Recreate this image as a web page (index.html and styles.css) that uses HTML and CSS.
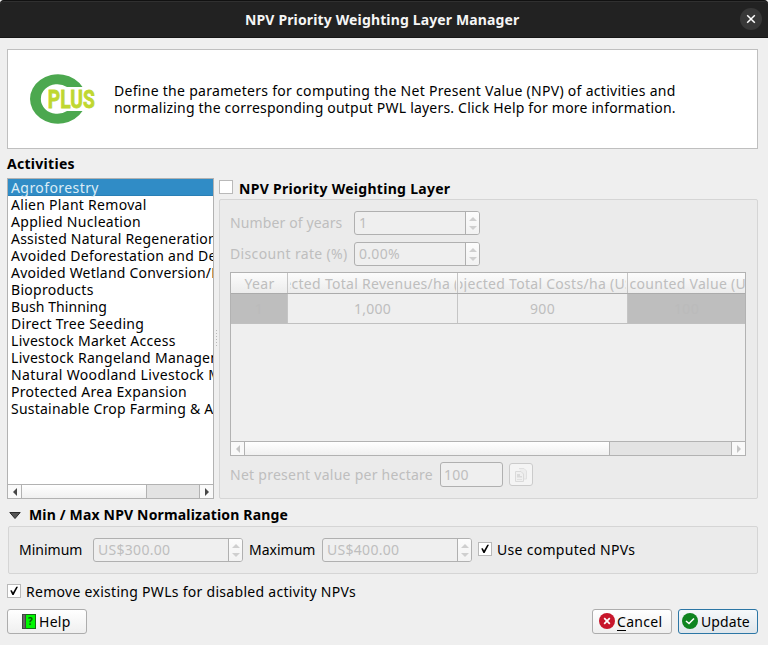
FILE: index.html
```html
<!DOCTYPE html>
<html lang="en">
<head>
<meta charset="utf-8">
<title>NPV Priority Weighting Layer Manager</title>
<link rel="stylesheet" href="styles.css">
</head>
<body>
<svg class="defs" width="0" height="0">
  <symbol id="check" viewBox="0 0 14 14"><path d="M3.2 6.6 4.8 6.2 6 8.6 9.3 2.8 11 2.8 6.6 11 5.4 11Z" fill="#000"/></symbol>
  <symbol id="up" viewBox="0 0 8 4"><path d="M0 4 4 0 8 4Z"/></symbol>
  <symbol id="down" viewBox="0 0 8 4"><path d="M0 0 4 4 8 0Z"/></symbol>
  <symbol id="left" viewBox="0 0 4 8"><path d="M4 0 0 4 4 8Z"/></symbol>
  <symbol id="right" viewBox="0 0 4 8"><path d="M0 0 4 4 0 8Z"/></symbol>
</svg>
<div class="window">
  <header class="titlebar">
    <h1 class="title">NPV Priority Weighting Layer Manager</h1>
    <button class="close" aria-label="Close"><svg width="22" height="22" viewBox="0 0 22 22"><path d="M7.2 7.2 14.8 14.8M14.8 7.2 7.2 14.8" stroke="#fff" stroke-width="1.5"/></svg></button>
  </header>
  <main class="content">
    <section class="banner">
      <svg class="logo" width="68" height="52" viewBox="0 0 68 52">
        <path d="M53.500 14A28 24.700 0 1 0 53.500 38H38A16.500 14.800 0 1 1 38 14Z" fill="#4ca84f"/>
        <text x="18.800" y="35.300" textLength="47" lengthAdjust="spacingAndGlyphs" class="logo-text">PLUS</text>
      </svg>
      <p class="intro"><span class="intro-a">Define the parameters for computing the Net Present Value (NPV) of activities and</span><br><span class="intro-b">normalizing the corresponding output PWL layers. Click Help for more information.</span></p>
    </section>
    <h2 class="heading activities-title">Activities</h2>
    <section class="panes">
      <div class="list">
        <ul class="items">
          <li class="selected">Agroforestry</li>
          <li>Alien Plant Removal</li>
          <li>Applied Nucleation</li>
          <li class="snug">Assisted Natural Regeneration</li>
          <li>Avoided Deforestation and Degradation</li>
          <li class="snug">Avoided Wetland Conversion/Restoration</li>
          <li>Bioproducts</li>
          <li class="tight">Bush Thinning</li>
          <li>Direct Tree Seeding</li>
          <li>Livestock Market Access</li>
          <li>Livestock Rangeland Management</li>
          <li class="loose">Natural Woodland Livestock Management</li>
          <li>Protected Area Expansion</li>
          <li class="snug">Sustainable Crop Farming &amp; Aquaculture</li>
        </ul>
        <div class="scroll">
          <span class="arrow"><svg width="4" height="8"><use href="#left"/></svg></span>
          <span class="thumb list-thumb"></span><span class="track"></span>
          <span class="arrow last"><svg width="4" height="8"><use href="#right"/></svg></span>
        </div>
      </div>
      <div class="splitter"></div>
      <div class="detail">
        <div class="group-title"><span class="box"></span><h2 class="heading layer-title">NPV Priority Weighting Layer</h2></div>
        <div class="group disabled">
          <div class="field"><label class="label years">Number of years</label><div class="spin"><span class="value">1</span><span class="steps"><svg width="8" height="4"><use href="#up"/></svg><svg width="8" height="4"><use href="#down"/></svg></span></div></div>
          <div class="field"><label class="label rate">Discount rate (%)</label><div class="spin"><span class="value">0.00%</span><span class="steps"><svg width="8" height="4"><use href="#up"/></svg><svg width="8" height="4"><use href="#down"/></svg></span></div></div>
          <div class="table">
            <div class="row head"><div class="cell"><div class="clip"><span>Year</span></div></div><div class="cell"><div class="clip"><span>Projected Total Revenues/ha (US$)</span></div></div><div class="cell"><div class="clip"><span>Projected Total Costs/ha (US$)</span></div></div><div class="cell"><div class="clip"><span>Discounted Value (US$)</span></div></div></div>
            <div class="row data"><div class="cell locked">1</div><div class="cell">1,000</div><div class="cell">900</div><div class="cell locked">100</div></div>
            <div class="empty"></div>
            <div class="scroll">
              <span class="arrow"><svg width="4" height="8"><use href="#left"/></svg></span>
              <span class="thumb table-thumb"></span><span class="track"></span>
              <span class="arrow last"><svg width="4" height="8"><use href="#right"/></svg></span>
            </div>
          </div>
          <div class="result"><label class="label npv">Net present value per hectare</label><div class="input">100</div>
            <button class="copy" aria-label="Copy"><svg width="12" height="14" viewBox="0 0 12 14"><path d="M4 .5H9L11.500 3V11H9" fill="#ededed" stroke="#e0e0e0"/><path d="M.5 3.500H6L8.500 6V13.500H.5Z" fill="#f0f0f0" stroke="#dadada"/><path d="M2 6H5V8H7V9.500H2Z" fill="#dadada"/><path d="M2 11.500H7" stroke="#e0e0e0"/></svg></button>
          </div>
        </div>
      </div>
    </section>
    <div class="collapse"><svg width="12" height="7" viewBox="0 0 12 7"><path d="M.8.5H11.200L6 6.500Z" fill="#555" stroke="#2b2b2b"/></svg><h2 class="heading range-title">Min / Max NPV Normalization Range</h2></div>
    <section class="range">
      <label class="label minimum">Minimum</label><div class="spin wide"><span class="value">US$300.00</span><span class="steps"><svg width="8" height="4"><use href="#up"/></svg><svg width="8" height="4"><use href="#down"/></svg></span></div>
      <label class="label maximum">Maximum</label><div class="spin wide"><span class="value">US$400.00</span><span class="steps"><svg width="8" height="4"><use href="#up"/></svg><svg width="8" height="4"><use href="#down"/></svg></span></div>
      <span class="box"><svg width="14" height="14"><use href="#check"/></svg></span><span class="computed">Use computed NPVs</span>
    </section>
    <div class="remove"><span class="box"><svg width="14" height="14"><use href="#check"/></svg></span><span class="remove-text">Remove existing PWLs for disabled activity NPVs</span></div>
    <footer class="actions">
      <button class="button help"><svg width="14" height="15" viewBox="0 0 14 15"><rect x=".5" y=".5" width="13" height="14" fill="#00f800" stroke="#176b17"/><path d="M.5.5H3.500V14.500H.5Z" fill="#666" stroke="#444"/><text x="6" y="11" class="help-mark">?</text></svg><span>Help</span></button>
      <button class="button cancel"><svg width="16" height="16" viewBox="0 0 16 16"><circle cx="8" cy="8" r="8" fill="#c7162b"/><path d="M5.200 5.200 10.800 10.800M10.800 5.200 5.200 10.800" stroke="#fff" stroke-width="1.700"/></svg><span><span class="mnemonic">C</span>ancel</span></button>
      <button class="button update"><svg width="16" height="16" viewBox="0 0 16 16"><circle cx="8" cy="8" r="8" fill="#0e8420"/><path d="M4 8 7 10.500 12 5.500" fill="none" stroke="#fff" stroke-width="1.600"/></svg><span>Update</span></button>
    </footer>
  </main>
</div>
</body>
</html>
```
FILE: styles.css
```css
* { box-sizing: border-box; }
body { margin: 0; background: #efefef; color: #000; font: 14px/17px "Noto Sans", sans-serif; letter-spacing: .29px; overflow: hidden; }
h1, h2, p, ul { margin: 0; padding: 0; }
button { font: inherit; color: inherit; padding: 0; margin: 0; }
svg { display: block; flex: none; letter-spacing: 0; }
.defs { display: none; }
.window { width: 768px; height: 645px; background: #efefef; white-space: nowrap; }
.titlebar { height: 38px; padding: 0 6px 0 245px; display: flex; align-items: center; justify-content: space-between; background: #222; border-top: 1px solid #111; border-bottom: 1px solid #161616; border-radius: 4px 4px 0 0; color: #f5f5f5; box-shadow: inset 0 1px #303030; }
.title { font-size: 14px; line-height: 20px; letter-spacing: .14px; padding-top: 2px; }
.close { width: 22px; height: 22px; border: 0; border-radius: 50%; background: #383838; }
.content { padding: 11px 10px 0 7px; }
.banner { height: 100px; border: 1px solid #bfbfbf; background: #fff; display: flex; align-items: center; padding-left: 21px; }
.logo-text { font: bold 26.500px Roboto, sans-serif; fill: #bfd730; stroke: #bfd730; stroke-width: .8px; }
.intro { margin-left: 17px; }
.intro-b { letter-spacing: .2px; }
.heading { font-size: 14px; line-height: 17px; }
.activities-title { margin: 6px 0; }
.panes { display: flex; height: 321px; }
.list { width: 207px; border: 1px solid #b2b2b2; background: #fff; display: flex; flex-direction: column; }
.items { flex: 1; list-style: none; overflow: hidden; }
.items li { height: 17px; padding-left: 3px; }
.items .selected { background: #308cc6; box-shadow: inset 0 -1px #2a7fb5; color: #dcecf6; letter-spacing: .42px; }
.items .tight { letter-spacing: .08px; }
.items .snug { letter-spacing: .22px; }
.items .loose { letter-spacing: .36px; }
.scroll { display: flex; height: 14px; border-top: 1px solid #b2b2b2; background: #e3e3e3; }
.arrow { width: 14px; display: flex; align-items: center; justify-content: center; background: #f9f9f9; border-right: 1px solid #b2b2b2; fill: #464646; }
.arrow.last { border-right: 0; border-left: 1px solid #b2b2b2; }
.thumb { background: linear-gradient(#fff, #f0f0f0); border-right: 1px solid #b2b2b2; }
.track { flex: 1; }
.list-thumb { width: 125px; }
.table-thumb { width: 365px; }
.splitter { width: 5px; display: flex; align-items: center; justify-content: center; }
.splitter::before { content: ""; width: 1px; height: 17px; background: repeating-linear-gradient(#b8b8b8 0 1px, transparent 1px 3px); }
.detail { width: 539px; }
.group-title { height: 21px; display: flex; padding-top: 2px; gap: 6px; }
.box { width: 14px; height: 14px; border: 1px solid #b9b9b9; background: #fff; flex: none; }
.box svg { margin: -1px; }
.group { height: 300px; padding: 11px 11px 0 10px; border: 1px solid #d5d5d5; border-radius: 2px; background: #ebebeb; }
.disabled { color: #bebebe; }
.field { display: flex; height: 31px; }
.label { line-height: 23px; flex: none; }
.field .label { width: 124px; }
.years { letter-spacing: .12px; }
.rate { letter-spacing: .35px; }
.spin { width: 126px; height: 24px; display: flex; border: 1px solid #b0b0b0; border-radius: 3px; color: #bebebe; background: #efefef; overflow: hidden; }
.value { flex: 1; padding-left: 4px; line-height: 22px; }
.steps { width: 14px; border-left: 1px solid #b0b0b0; background: linear-gradient(#fcfcfc, #f2f2f2); display: flex; flex-direction: column; align-items: center; justify-content: center; gap: 5px; fill: #cfcfcf; }
.table { height: 184px; border: 1px solid #b2b2b2; background: #efefef; display: flex; flex-direction: column; margin-top: -1px; width: 516px; }
.row { display: grid; grid-template-columns: 57px 170px 170px 1fr; }
.head { height: 21px; border-bottom: 1px solid #ababab; background: linear-gradient(#fcfcfc, #ececec); }
.cell { border-right: 1px solid #c5c5c5; display: flex; align-items: center; justify-content: center; overflow: hidden; min-width: 0; }
.cell:last-child { border-right: 0; }
.head .cell { padding: 0 1px 0 2px; }
.head .cell:last-child { padding-right: 0; }
.clip { flex: 1; min-width: 0; display: flex; justify-content: center; overflow: hidden; }
.clip span { flex: none; }
.data { height: 30px; border-bottom: 1px solid #c0c0c0; }
.locked { background: #bebebe; color: #bbb; }
.empty { flex: 1; }
.disabled .arrow { fill: #c5c5c5; }
.result { display: flex; margin-top: 6px; }
.npv { width: 210px; line-height: 25px; letter-spacing: .26px; }
.input { width: 63px; height: 25px; border: 1px solid #b0b0b0; border-radius: 3px; padding-left: 3px; line-height: 24px; background: #efefef; }
.copy { width: 24px; height: 23px; margin: 1px 0 0 6px; border: 1px solid #cbcbcb; border-radius: 3px; background: #f4f4f4; display: flex; align-items: center; justify-content: center; }
.collapse { height: 27px; padding: 7px 0 0 2px; display: flex; gap: 8px; }
.collapse svg { margin-top: 6px; }
.range-title { letter-spacing: .17px; }
.range { margin-left: 1px; height: 48px; padding: 11px 0 0 10px; display: flex; border: 1px solid #d5d5d5; border-radius: 2px; background: #ebebeb; }
.minimum { width: 74px; letter-spacing: 0; }
.wide { width: 150px; }
.maximum { width: 79px; padding-left: 6px; letter-spacing: 0; }
.range .box { margin: 4px 5px 0 6px; }
.computed { line-height: 23px; }
.remove { height: 35px; display: flex; padding-top: 10px; gap: 5px; }
.remove-text { margin-top: -1px; }
.actions { display: flex; }
.button { width: 80px; height: 25px; border: 1px solid #adadad; border-radius: 3px; background: linear-gradient(#fff, #efefef); display: flex; align-items: center; padding-bottom: 1px; letter-spacing: .1px; }
.help { padding-left: 14px; gap: 3px; letter-spacing: .3px; }
.help-mark { font: bold 10px "Noto Sans", sans-serif; fill: #105010; }
.cancel { margin-left: auto; padding-left: 6px; gap: 2px; letter-spacing: .3px; }
.mnemonic { box-shadow: 0 -1px #000 inset; }
.update { margin-left: 6px; padding-left: 3px; gap: 3px; border-color: #2c76a5; background: linear-gradient(#f5f8fa, #dfe6eb); }
```
